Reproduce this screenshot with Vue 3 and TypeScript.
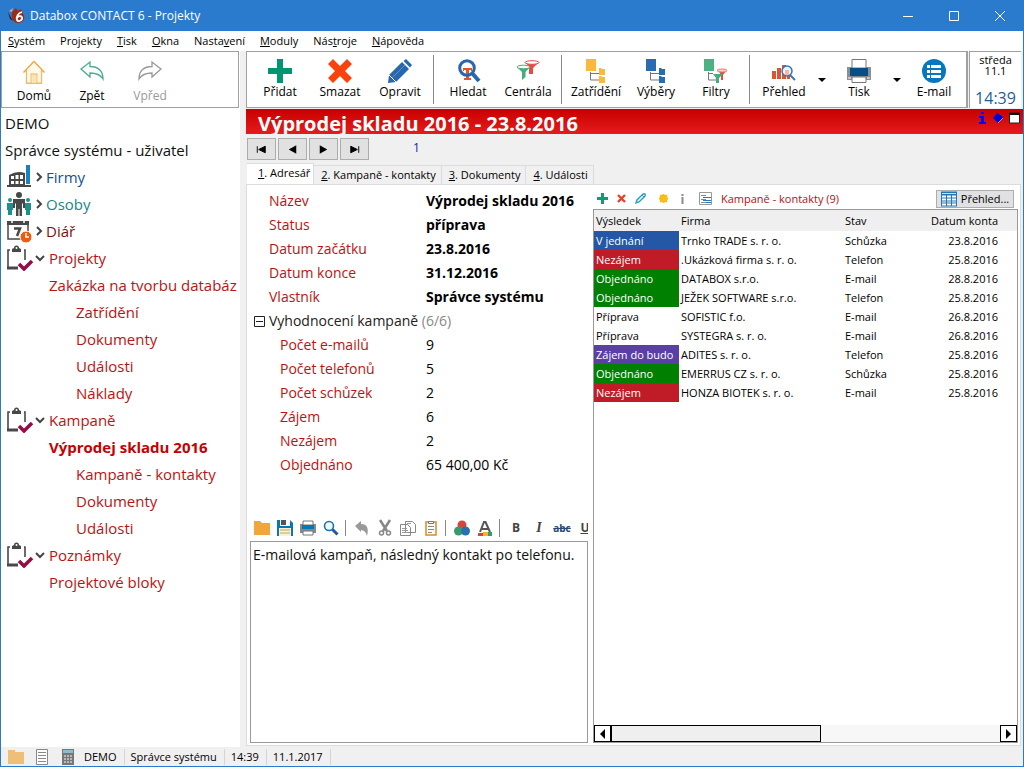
<script setup lang="ts">
import { ref } from 'vue'

interface Tool { label: string; icon: string; drop?: boolean; off?: boolean }
interface Node { label: string; tone: string; level: string; icon?: string; open?: boolean }
interface Contact { result: string; tone: string; company: string; state: string; date: string }

const icons: Record<string, string> = {
  logo: '<path d="M1 4l4-3-1 4z" fill="#c9a79b"/><path d="M4 5l4-4 2 3 3-2 3 7c1 5-3 7-6 7-5 0-7-5-6-11z" fill="#9c2b16"/><path d="M0 5l5 9-3-2z" fill="#3d1b20"/><path d="M14 5c-4 1-6 5-5 8 1 2 4 1 5-1 1-3-3-4-5-1" fill="none" stroke="#fff" stroke-width="1.800"/>',
  home: '<path d="M1.500 12.500L12 1.500l10.500 11M4.500 10v13h15V10M9 23v-9h6v9" fill="none" stroke="#f0a23a" stroke-width="1.300"/><path d="M9.500 14.500h5V23h-5z" fill="#fbe3b5"/><path d="M4.500 10L12 2.500l7.500 7.500v13H15v-9H9v9H4.500z" fill="#fff3d6" opacity=".5"/>',
  back: '<path d="M1 9l9-7v4.500c8 0 13 4 13 12.500-3-5-7-6-13-6V17z" fill="#f3fffb" stroke="#52a98f" stroke-width="1.300"/>',
  forward: '<path d="M23 9l-9-7v4.500C6 6.500 1 10.500 1 19c3-5 7-6 13-6V17z" fill="#fff" stroke="#999" stroke-width="1.300"/>',
  add: '<path d="M9 0h6v9h9v6h-9v9H9v-9H0V9h9z" fill="#009672"/>',
  del: '<path d="M5 0l7 7 7-7 5 5-7 7 7 7-5 5-7-7-7 7-5-5 7-7-7-7z" fill="#f8430d"/>',
  edit: '<path d="M1 16L14 3l7 7L8 23l-8 1z" fill="#2866b0"/><path d="M15.500 2L18 0l6 6-2 2.500z" fill="#2866b0"/><path d="M1 16l7 7" stroke="#fff"/><path d="M17 6L4 19" stroke="#6391c6"/>',
  find: '<path d="M7 9h9v3h-1v-1h-2v8h2v2H8v-2h2v-8H8v1H7z" fill="#e4532a"/><circle cx="11" cy="9" r="7.300" fill="none" stroke="#2866ad" stroke-width="3"/><path d="M16 14l7 8" stroke="#2866ad" stroke-width="4"/>',
  central: '<path d="M10 3l12 1-5 5v6h-4V9z" fill="#e84a45"/><ellipse cx="16" cy="3.500" rx="7" ry="1.800" fill="#fff" stroke="#e84a45"/><path d="M1 8h13L9.500 13v5L6 21v-8z" fill="#46ab7d"/><ellipse cx="7.500" cy="8" rx="6.500" ry="1.800" fill="#fff" stroke="#46ab7d"/>',
  sort: '<path d="M2 0h10v12H2zM15 9h2l1 1h3v6h-6zM15 17h2l1 1h3v6h-6z" fill="#fbb83b"/><path d="M6.500 13v8H15M6.500 14.500H15" fill="none" stroke="#777"/>',
  select: '<path d="M2 0h10v12H2zM15 9h2l1 1h3v6h-6zM15 17h2l1 1h3v6h-6z" fill="#286db4"/><path d="M6.500 13v8H15M6.500 14.500H15" fill="none" stroke="#777"/>',
  filter: '<path d="M0 0h10v12H0z" fill="#4db184"/><path d="M4.500 13v8H12M4.500 14.500H9" fill="none" stroke="#777"/><path d="M14 11h9l-4 5v5h-2v-5z" fill="#e84a45"/><ellipse cx="18" cy="11.500" rx="5" ry="1.500" fill="#fbd0cb" stroke="#e97970"/><path d="M9 15h10l-4 4v5h-3v-5z" fill="#46ab7d"/>',
  overview: '<path d="M0 12h4v8H0zM5 9h4v11H5zM10 6h4v14h-4zM15 11h3v9h-3z" fill="#d95536"/><circle cx="15" cy="12" r="5" fill="#eaf5ff" stroke="#3b73b5" stroke-width="1.500"/><path d="M18 16l5 5" stroke="#3b73b5" stroke-width="2"/><path d="M13 11h4v5h-4z" fill="#f6b9a6"/>',
  print: '<path d="M0 8h24v13H0z" fill="#8b8f92"/><path d="M5 .5h14V9H5zM5 18h14v5.500H5z" fill="#fff" stroke="#777"/><path d="M3 9h18v8H3z" fill="#074d86"/><path d="M1 19h3M20 19h3" stroke="#fff"/>',
  mail: '<circle cx="12" cy="12" r="12" fill="#0878bd"/><path d="M5 6h3v3H5zM9 6h10v3H9zM5 11h3v3H5zM9 11h10v3H9zM5 16h3v3H5zM9 16h10v3H9z" fill="#fff"/>',
  firm: '<path d="M0 20h24v2H0zM2 10q8-5 16-2v13H2z" fill="#484848"/><path d="M4 11h3v3H4zM8.500 10h3v4h-3zM13 10h3v4h-3zM4 16h3v3H4zM8.500 16h3v3h-3zM13 16h3v3h-3z" fill="#fff"/><path d="M19 0h4v19h-4z" fill="#1682c0"/>',
  people: '<g fill="#1a918d"><circle cx="3" cy="8" r="2"/><circle cx="21" cy="8" r="2"/><path d="M0 11h6v7H5v5H1v-5H0zM18 11h6v7h-1v5h-4v-5h-1z"/></g><circle cx="12" cy="3" r="3" fill="#484848"/><path d="M6 7h12v9h-2v-5l-1 1v12h-2.500v-7h-1v7H9V12l-1-1v5H6z" fill="#484848"/>',
  diary: '<path d="M1 3h20v17H1z" fill="#fff" stroke="#484848" stroke-width="1.500"/><path d="M0 2h22v4H0z" fill="#484848"/><path d="M5 1v3M17 1v3" stroke="#fff" stroke-width="1.500"/><path d="M7 9.500h6L10 17" fill="none" stroke="#484848" stroke-width="2.500"/><circle cx="19" cy="18" r="6" fill="#f05a0b" stroke="#fff"/><path d="M19 14v4h3" fill="none" stroke="#fff" stroke-width="1.500"/>',
  task: '<path d="M3 4H1v18M17 4h1v10" fill="none" stroke="#484848" stroke-width="1.600"/><path d="M0 22h11" stroke="#484848" stroke-width="3"/><path d="M5 6V3l2-1a2.500 2.500 0 0 1 5 0l2 1v3z" fill="#484848"/><circle cx="9.500" cy="2" r="1" fill="#fff"/><path d="M12 18l5 5 8-8" fill="none" stroke="#970b47" stroke-width="3.500"/>',
  folder: '<path d="M0 1h6l2 2h8v12H0z" fill="#f1a63b"/>',
  folderPale: '<path d="M0 1h7v2h9v12H0z" fill="#efbf78"/>',
  save: '<path d="M0 0h13l3 3v13H0z" fill="#0878b4"/><path d="M3 0h10v6H3z" fill="#fff"/><path d="M4 0h5v5H4z" fill="#555"/><path d="M2 8h12v8H2z" fill="#fff2ca"/><path d="M3 10h10M3 13h10" stroke="#b0a982"/>',
  printer: '<path d="M0 4h16v9H0z" fill="#888"/><path d="M3 1h10v4H3zM3 11h10v4H3z" fill="#fff" stroke="#777"/><path d="M2 5h12v4H2z" fill="#0876b3"/>',
  lens: '<circle cx="6" cy="6" r="4.500" fill="#eef9ff" stroke="#1872b8" stroke-width="1.600"/><path d="M9.500 9.500l5 5" stroke="#1f5ba5" stroke-width="3"/>',
  undo: '<path d="M1 6l6-5v3c6 0 8 4 6 12-1-4-3-6-6-6v2z" fill="#999"/>',
  cut: '<path d="M3 0l7 11M13 0L6 11" stroke="#888" stroke-width="2.500"/><circle cx="4.500" cy="13" r="2" fill="none" stroke="#888" stroke-width="1.500"/><circle cx="11.500" cy="13" r="2" fill="none" stroke="#888" stroke-width="1.500"/>',
  copy: '<path d="M5.500 1.500h7l3 3v8h-10zM.5 4.500h7l3 3v8H.5z" fill="#fff" stroke="#888"/><path d="M2 8.500h5M2 10.500h6M2 12.500h6M7 3.500h4" stroke="#999"/>',
  paste: '<path d="M3 2h10v13H3z" fill="#fff" stroke="#d88b2d" stroke-width="1.500"/><path d="M5.500 3.500v-2h5v2z" fill="#fff" stroke="#777"/><path d="M5 6.500h6M5 9.500h6M5 12.500h4" stroke="#888"/>',
  colors: '<circle cx="8" cy="5" r="4.500" fill="#d9443a"/><circle cx="4.500" cy="11" r="4.500" fill="#39996d"/><circle cx="11.500" cy="11" r="4.500" fill="#2870b3"/>',
  fontColor: '<path d="M3 12L7 2h1.500L13 12M5 9h6" fill="none" stroke="#555" stroke-width="2"/><path d="M1 13h5v3H1z" fill="#db4433"/><path d="M6 12h5v4H6z" fill="#f3b727"/><path d="M11 12h4v4h-4z" fill="#38996d"/>',
  plus: '<path d="M6 2h3v4h4v3H9v4H6V9H2V6h4z" fill="#109b76"/>',
  cross: '<path d="M4 4l7 7M11 4l-7 7" stroke="#e8402c" stroke-width="2.400"/>',
  pencil: '<path d="M3 12l1-3 6-6q3-1 2 2l-6 6z" fill="#fff" stroke="#239fcb" stroke-width="1.400"/><path d="M9 4l2 2" stroke="#239fcb"/>',
  sun: '<circle cx="7.500" cy="7.500" r="4" fill="#fbbd11"/><path d="M7.500 3v9M3 7.500h9M4 4l7 7M11 4l-7 7" stroke="#fbbd11" stroke-width="1.500"/>',
  info: '<path d="M6.500 6h2v7h-2zM6.500 3h2v2h-2z" fill="#8a8a8a"/>',
  form: '<path d="M1.500 1.500h12v12h-12z" fill="#fff" stroke="#999"/><path d="M3 4.500h5M3 8.500h5M3 11.500h5" stroke="#888"/><path d="M5 6.500h8M5 9.500h8M8 11.500h5" stroke="#287bc2"/>',
  grid: '<path d="M0 0h16v15H0z" fill="#2477b7"/><path d="M1 4h4v2H1zM6 4h4v2H6zM11 4h4v2h-4zM1 7h4v2H1zM6 7h4v2H6zM11 7h4v2h-4zM1 10h4v1H1zM6 10h4v1H6zM11 10h4v1h-4zM1 12h4v2H1zM6 12h4v2H6zM11 12h4v2h-4z" fill="#fff"/><path d="M1 2h14" stroke="#bce1f9"/>',
  list: '<path d="M2.500.5h11v15h-11z" fill="#fff" stroke="#888"/><path d="M4 3.500h8M4 6.500h8M4 9.500h8M4 12.500h8" stroke="#888"/>',
  calc: '<path d="M2 0h12v16H2z" fill="#777"/><path d="M3 1h10v3H3z" fill="#8cbcd2"/><path d="M4 6h2v2H4zM7 6h2v2H7zM10 6h2v2h-2zM4 9h2v2H4zM7 9h2v2H7zM10 9h2v2h-2zM4 12h2v2H4zM7 12h2v2H7zM10 12h2v2h-2z" fill="#b8b8b8"/>',
  first: '<path d="M3.500 4v7M12 4v7L5 7.500z" fill="#000" stroke="#000"/>',
  prev: '<path d="M12 3v9L4 7.500z"/>',
  next: '<path d="M4 3v9l8-4.500z"/>',
  last: '<path d="M12.500 4v7M4 4v7l7-3.500z" fill="#000" stroke="#000"/>',
}

const menus = [['', 'S', 'ystém'], ['Projekt', '', 'y'], ['', 'T', 'isk'], ['', 'O', 'kna'], ['Nasta', 'v', 'ení'], ['', 'M', 'oduly'], ['Nás', 't', 'roje'], ['', 'N', 'ápověda']]
const homeTools: Tool[] = [{ label: 'Domů', icon: 'home' }, { label: 'Zpět', icon: 'back' }, { label: 'Vpřed', icon: 'forward', off: true }]
const toolGroups: Tool[][] = [
  [{ label: 'Přidat', icon: 'add' }, { label: 'Smazat', icon: 'del' }, { label: 'Opravit', icon: 'edit' }],
  [{ label: 'Hledat', icon: 'find' }, { label: 'Centrála', icon: 'central' }],
  [{ label: 'Zatřídění', icon: 'sort' }, { label: 'Výběry', icon: 'select' }, { label: 'Filtry', icon: 'filter' }],
  [{ label: 'Přehled', icon: 'overview', drop: true }, { label: 'Tisk', icon: 'print', drop: true }, { label: 'E-mail', icon: 'mail' }],
]
const tree: Node[] = [
  { label: 'DEMO', tone: 'dark', level: 'root' },
  { label: 'Správce systému - uživatel', tone: 'dark', level: 'root' },
  { label: 'Firmy', tone: 'blue', level: 'module', icon: 'firm' },
  { label: 'Osoby', tone: 'teal', level: 'module', icon: 'people' },
  { label: 'Diář', tone: 'maroon', level: 'module', icon: 'diary' },
  { label: 'Projekty', tone: 'red', level: 'module', icon: 'task', open: true },
  { label: 'Zakázka na tvorbu databáze', tone: 'red', level: 'item' },
  { label: 'Zatřídění', tone: 'red', level: 'leaf' },
  { label: 'Dokumenty', tone: 'red', level: 'leaf' },
  { label: 'Události', tone: 'red', level: 'leaf' },
  { label: 'Náklady', tone: 'red', level: 'leaf' },
  { label: 'Kampaně', tone: 'red', level: 'module', icon: 'task', open: true },
  { label: 'Výprodej skladu 2016', tone: 'current', level: 'item' },
  { label: 'Kampaně - kontakty', tone: 'red', level: 'leaf' },
  { label: 'Dokumenty', tone: 'red', level: 'leaf' },
  { label: 'Události', tone: 'red', level: 'leaf' },
  { label: 'Poznámky', tone: 'red', level: 'module', icon: 'task', open: true },
  { label: 'Projektové bloky', tone: 'red', level: 'item' },
]
const tabs = ['Adresář', 'Kampaně - kontakty', 'Dokumenty', 'Události']
const activeTab = ref(0)
const fields = [['Název', 'Výprodej skladu 2016'], ['Status', 'příprava'], ['Datum začátku', '23.8.2016'], ['Datum konce', '31.12.2016'], ['Vlastník', 'Správce systému']]
const stats = [['Počet e-mailů', '9'], ['Počet telefonů', '5'], ['Počet schůzek', '2'], ['Zájem', '6'], ['Nezájem', '2'], ['Objednáno', '65 400,00 Kč']]
const editTools = [['folder', 'save', 'printer', 'lens'], ['undo', 'cut', 'copy', 'paste'], ['colors', 'fontColor']]
const note = ref('E-mailová kampaň, následný kontakt po telefonu.')
const contacts: Contact[] = [
  { result: 'V jednání', tone: 'talk', company: 'Trnko TRADE s. r. o.', state: 'Schůzka', date: '23.8.2016' },
  { result: 'Nezájem', tone: 'no', company: '.Ukázková firma s. r. o.', state: 'Telefon', date: '25.8.2016' },
  { result: 'Objednáno', tone: 'yes', company: 'DATABOX s.r.o.', state: 'E-mail', date: '28.8.2016' },
  { result: 'Objednáno', tone: 'yes', company: 'JEŽEK SOFTWARE s.r.o.', state: 'Telefon', date: '25.8.2016' },
  { result: 'Příprava', tone: 'plain', company: 'SOFISTIC f.o.', state: 'E-mail', date: '26.8.2016' },
  { result: 'Příprava', tone: 'plain', company: 'SYSTEGRA s. r. o.', state: 'E-mail', date: '26.8.2016' },
  { result: 'Zájem do budo', tone: 'later', company: 'ADITES s. r. o.', state: 'Telefon', date: '25.8.2016' },
  { result: 'Objednáno', tone: 'yes', company: 'EMERRUS CZ s. r. o.', state: 'Schůzka', date: '25.8.2016' },
  { result: 'Nezájem', tone: 'no', company: 'HONZA BIOTEK s. r. o.', state: 'E-mail', date: '25.8.2016' },
]
</script>

<template>
  <div class="window">
    <header class="titlebar">
      <svg class="i17" viewBox="0 0 17 17" v-html="icons.logo" />
      <h1>Databox CONTACT 6 - Projekty</h1>
      <button aria-label="Minimalizovat"><svg viewBox="0 0 10 10"><path d="M0 5.500h10" /></svg></button>
      <button aria-label="Maximalizovat"><svg viewBox="0 0 10 10"><path d="M.5.5h9v9h-9z" /></svg></button>
      <button aria-label="Zavřít"><svg viewBox="0 0 10 10"><path d="M0 0l10 10M10 0L0 10" /></svg></button>
    </header>

    <nav class="menu">
      <button v-for="m in menus" :key="m.join('')">{{ m[0] }}<u>{{ m[1] }}</u>{{ m[2] }}</button>
    </nav>

    <div class="body">
      <aside class="side">
        <div class="bar home">
          <button v-for="t in homeTools" :key="t.label" class="tool" :disabled="t.off">
            <svg class="i24" viewBox="0 0 24 24" v-html="icons[t.icon]" />{{ t.label }}
          </button>
        </div>
        <ul class="tree">
          <li v-for="(n, i) in tree" :key="i">
            <a href="#" :class="[n.level, n.tone]">
              <svg v-if="n.icon" class="i24" viewBox="0 0 24 24" v-html="icons[n.icon]" />
              <svg v-if="n.icon" class="chev" :class="{ closed: !n.open }" :viewBox="n.open ? '0 0 10 10' : '0 0 7 10'"><path :d="n.open ? 'M1 3l4 4 4-4' : 'M2 1l4 4-4 4'" /></svg>
              <span>{{ n.label }}</span>
            </a>
          </li>
        </ul>
      </aside>

      <main class="main">
        <div class="top">
          <div class="bar tools">
            <div v-for="(g, i) in toolGroups" :key="i" class="group">
              <template v-for="t in g" :key="t.label">
                <button class="tool"><svg class="i24" viewBox="0 0 24 24" v-html="icons[t.icon]" />{{ t.label }}</button>
                <button v-if="t.drop" class="drop" :aria-label="t.label + ' – možnosti'"><svg viewBox="0 0 8 4"><path d="M0 0h8L4 4z" /></svg></button>
              </template>
            </div>
          </div>
          <div class="clock"><span>středa</span><span>11.1</span><time>14:39</time></div>
        </div>

        <div class="banner">
          <h2>Výprodej skladu 2016 - 23.8.2016</h2>
          <svg viewBox="0 0 42 12">
            <path d="M3 0h3v2H3zM1 4h5v6h2v2H1v-2h2V6H1z" fill="#00f" />
            <path d="M15 6l4-5 5 3 1 2-5 5z" fill="#0000d8" /><path d="M20 11l5-5" stroke="#999" />
            <path d="M31.500 1h10v10h-10z" fill="#fff" stroke="#222" /><path d="M31 2h11" stroke="#111" stroke-width="2" />
          </svg>
        </div>

        <div class="record">
          <button v-for="b in [['first', 'První'], ['prev', 'Předchozí'], ['next', 'Další'], ['last', 'Poslední']]" :key="b[0]" :aria-label="b[1]">
            <svg class="i15" viewBox="0 0 16 15" v-html="icons[b[0]]" />
          </button>
          <output>1</output>
        </div>

        <div class="tabs" role="tablist">
          <button v-for="(t, i) in tabs" :key="t" role="tab" :aria-selected="i === activeTab" @click="activeTab = i"><u>{{ i + 1 }}</u>. {{ t }}</button>
        </div>

        <div class="page">
          <section class="detail">
            <dl>
              <div v-for="f in fields" :key="f[0]"><dt>{{ f[0] }}</dt><dd><b>{{ f[1] }}</b></dd></div>
            </dl>
            <button class="fold"><svg viewBox="0 0 11 11"><path d="M.5.5h10v10H.5zM2 5.500h7" /></svg>Vyhodnocení kampaně <span>(6/6)</span></button>
            <dl class="stats">
              <div v-for="s in stats" :key="s[0]"><dt>{{ s[0] }}</dt><dd>{{ s[1] }}</dd></div>
            </dl>
            <div class="editbar">
              <div v-for="(g, i) in editTools" :key="i" class="egroup">
                <button v-for="t in g" :key="t" :aria-label="t"><svg class="i16" viewBox="0 0 16 16" v-html="icons[t]" /></button>
              </div>
              <div class="egroup style">
                <button><b>B</b></button><button><i>I</i></button><button><s>abc</s></button><button><u>U</u></button>
              </div>
            </div>
            <textarea v-model="note" aria-label="Poznámka" />
          </section>

          <section class="list">
            <div class="listbar">
              <button v-for="t in ['plus', 'cross', 'pencil', 'sun', 'info', 'form']" :key="t" :class="t" :aria-label="t"><svg class="i15" viewBox="0 0 15 15" v-html="icons[t]" /></button>
              <h3>Kampaně - kontakty (9)</h3>
              <button class="all"><svg class="i16" viewBox="0 0 16 15" v-html="icons.grid" />Přehled...</button>
            </div>
            <div class="box">
              <table>
                <colgroup><col class="c1"><col class="c2"><col class="c3"><col></colgroup>
                <thead><tr><th>Výsledek</th><th>Firma</th><th>Stav</th><th class="date">Datum konta</th></tr></thead>
                <tbody>
                  <tr v-for="c in contacts" :key="c.company">
                    <td :class="c.tone">{{ c.result }}</td><td>{{ c.company }}</td><td>{{ c.state }}</td><td class="date">{{ c.date }}</td>
                  </tr>
                </tbody>
              </table>
              <div class="scroll">
                <button aria-label="Doleva"><svg viewBox="0 0 5 10"><path d="M5 0v10L0 5z" /></svg></button>
                <div class="track"><div class="thumb" /></div>
                <button aria-label="Doprava"><svg viewBox="0 0 5 10"><path d="M0 0v10l5-5z" /></svg></button>
              </div>
            </div>
          </section>
        </div>
      </main>
    </div>

    <footer class="status">
      <div class="sicons">
        <svg class="i16" viewBox="0 0 16 16" v-html="icons.folderPale" />
        <svg class="i16" viewBox="0 0 16 16" v-html="icons.list" />
        <svg class="i16" viewBox="0 0 16 16" v-html="icons.calc" />
      </div>
      <span>DEMO</span><span>Správce systému</span><span>14:39</span><span>11.1.2017</span>
    </footer>
  </div>
</template>

<style>
body { margin: 0; }
</style>

<style scoped>
* { box-sizing: border-box; }
.window { height: 100vh; display: flex; flex-direction: column; background: #f0f0f0; border: 1px solid #2a7bce; border-top: 0; font: 12px/16px "Open Sans", "Noto Sans", sans-serif; color: #000; overflow: hidden; }
button { font: inherit; color: inherit; background: none; border: 0; padding: 0; margin: 0; display: flex; align-items: center; justify-content: center; white-space: pre; }
h1, h2, h3, dl, dd, ul { margin: 0; padding: 0; font-weight: normal; }
svg { display: block; flex: none; overflow: visible; }
.i24 { width: 24px; height: 24px; }
.i17 { width: 17px; height: 17px; }
.i16 { width: 16px; height: 16px; }
.i15 { width: 15px; height: 15px; }

.titlebar { flex: none; height: 31px; background: #2a7bce; color: #fff; display: flex; align-items: center; padding-left: 7px; }
.titlebar h1 { flex: 1; font-size: 12px; margin-left: 5px; }
.titlebar button { width: 46px; height: 31px; }
.titlebar svg:not(.i17) { width: 10px; height: 10px; fill: none; stroke: #fff; }
.menu { flex: none; height: 20px; background: #fff; display: flex; gap: 15px; padding-left: 7px; font-size: 11px; }

.body { flex: 1; min-height: 0; display: flex; gap: 6px; }
.side { flex: none; width: 239px; background: #fff; overflow: hidden; }
.bar { height: 57px; background: #fff; border: 1px solid #a0a0a0; display: flex; }
.tool { width: 60px; flex-direction: column; gap: 1px; font-size: 12px; line-height: 16px; }
.tool:disabled { color: #9a9a9a; }
.home { margin: 0 1px 1px 0; padding: 4px 0 0 3px; }
.home .tool { width: 58px; gap: 4px; }
.tree { list-style: none; }
.tree a { height: 27px; display: flex; align-items: center; margin-right: 3px; font-size: 15px; white-space: nowrap; overflow: hidden; text-decoration: none; }
.root { padding-left: 4px; }
.module { padding-left: 6px; }
.item { padding-left: 48px; }
.leaf { padding-left: 75px; }
.chev { width: 10px; height: 10px; margin: 0 4px; fill: none; stroke: #444; stroke-width: 2; }
.chev.closed { width: 7px; }
.dark { color: #111; }
.blue { color: #15518b; }
.teal { color: #1a8583; }
.maroon { color: #7b1010; }
.red { color: #b81414; }
.current { color: #c40000; font-weight: bold; }

.main { flex: 1; min-width: 0; display: flex; flex-direction: column; }
.top { flex: none; display: flex; gap: 1px; padding: 0 2px 1px 0; }
.tools { flex: 1; padding-left: 3px; border-right-width: 2px; }
.group { display: flex; }
.group + .group::before { content: ""; width: 1px; margin: 3px 4px 3px 3px; background: #888; }
.drop { width: 15px; }
.drop svg { width: 8px; height: 4px; }
.clock { width: 52px; background: #fff; border: solid #a0a0a0; border-width: 1px 0 0 1px; display: flex; flex-direction: column; align-items: center; font-size: 11px; line-height: 11px; padding-top: 2px; }
.clock time { margin-top: auto; font-size: 16px; line-height: 20px; color: #1f6096; }
.banner { flex: none; height: 25px; background: linear-gradient(#c80000, #e61c1c); color: #fff; display: flex; justify-content: space-between; overflow: hidden; padding: 1px 3px 0 12px; }
.banner h2 { font-size: 20px; line-height: 28px; font-weight: bold; white-space: nowrap; }
.banner svg { width: 42px; height: 12px; margin-top: 2px; }

.record { flex: none; display: flex; gap: 2px; padding: 4px 0 3px 1px; }
.record button { width: 29px; height: 22px; background: #e1e1e1; border: 1px solid #adadad; }
.record output { margin-left: 42px; color: #1a1a9a; line-height: 19px; }
.tabs { flex: none; display: flex; align-items: flex-end; font-size: 11px; height: 21px; padding-left: 1px; }
.tabs button { height: 19px; padding: 0 5px 0 7px; border: 1px solid #dcdcdc; border-width: 1px 1px 0 0; }
.tabs button[aria-selected="true"] { height: 21px; padding: 0 3px 3px 11px; background: #fff; }
.page { flex: 1; min-height: 0; display: grid; grid-template-columns: 343px minmax(0, 1fr); background: #fff; border: 1px solid #dcdcdc; margin: 0 2px 1px 0; }
.detail { display: flex; flex-direction: column; padding: 4px 2px 2px 3px; font-size: 14px; line-height: 24px; min-height: 0; overflow: hidden; }
.detail dl > div { display: flex; padding-left: 19px; white-space: nowrap; }
.detail dt { width: 157px; color: #b81414; }
.detail .stats > div { padding-left: 30px; }
.detail .stats dt { width: 146px; }
.fold { justify-content: flex-start; padding-left: 4px; height: 24px; flex: none; color: #222; }
.fold svg { width: 11px; height: 11px; margin-right: 4px; fill: none; stroke: #222; }
.fold span { color: #888; }
.editbar { display: flex; align-items: center; flex: none; height: 25px; margin-top: 38px; overflow: hidden; }
.egroup { display: flex; gap: 7px; padding: 0 6px 0 4px; }
.egroup + .egroup { border-left: 1px solid #888; padding-left: 8px; }
.egroup.style { font-size: 12px; line-height: 18px; color: #444; padding-right: 0; }
.style button { width: 16px; }
.style i { font-family: "Liberation Serif", serif; font-size: 14px; font-weight: bold; }
.style s { font-size: 10px; font-weight: bold; color: #2a4779; }
.style u { font-weight: bold; }
textarea { flex: 1; min-height: 0; margin: 1px 0 0; border: 1px solid #999; border-radius: 0; resize: none; padding: 1px 2px; font: 14px/24px "Open Sans", "Noto Sans", sans-serif; color: #111; background: #fff; outline: 0; overflow: hidden; white-space: pre; }

.list { display: flex; flex-direction: column; padding: 3px 2px 2px 3px; min-height: 0; }
.listbar { display: flex; align-items: center; height: 21px; flex: none; gap: 4px; padding: 0 4px 0 2px; font-size: 11px; }
.listbar .sun { margin-left: 4px; }
.listbar .form { margin-left: 4px; }
.listbar h3 { flex: 1; font-size: 11px; color: #b50f1b; margin-left: 4px; white-space: nowrap; }
.all { width: 78px; height: 18px; background: #e1e1e1; border: 1px solid #adadad; gap: 4px; }
.box { flex: 1; min-height: 0; display: flex; flex-direction: column; justify-content: space-between; border: 1px solid #999; }
table { width: 100%; table-layout: fixed; border-collapse: collapse; font-size: 11px; line-height: 19px; }
.c1 { width: 85px; }
.c2 { width: 164px; }
.c3 { width: 79px; }
th, td { padding: 0 2px; text-align: left; font-weight: normal; white-space: nowrap; overflow: hidden; }
thead tr { background: #efefef; line-height: 21px; }
.date { text-align: right; padding-right: 19px; }
.talk { background: #2458a6; color: #fff; }
.no { background: #c01c28; color: #fff; }
.yes { background: #008000; color: #fff; }
.later { background: #5a3fa5; color: #fff; }
.scroll { display: flex; height: 17px; flex: none; }
.scroll button { width: 17px; border: 1px solid #000; background: #fff; }
.scroll svg { width: 5px; height: 10px; }
.track { flex: 1; background: #f7f7f7; }
.thumb { width: 54%; height: 17px; background: #efefef; border: 1px solid #000; }

.status { flex: none; height: 19px; display: flex; align-items: center; font-size: 11px; white-space: nowrap; }
.sicons { display: flex; gap: 10px; padding: 0 2px 0 7px; }
.status span { padding: 0 7px 0 6px; border-right: 1px solid #d5d5d5; }
</style>
